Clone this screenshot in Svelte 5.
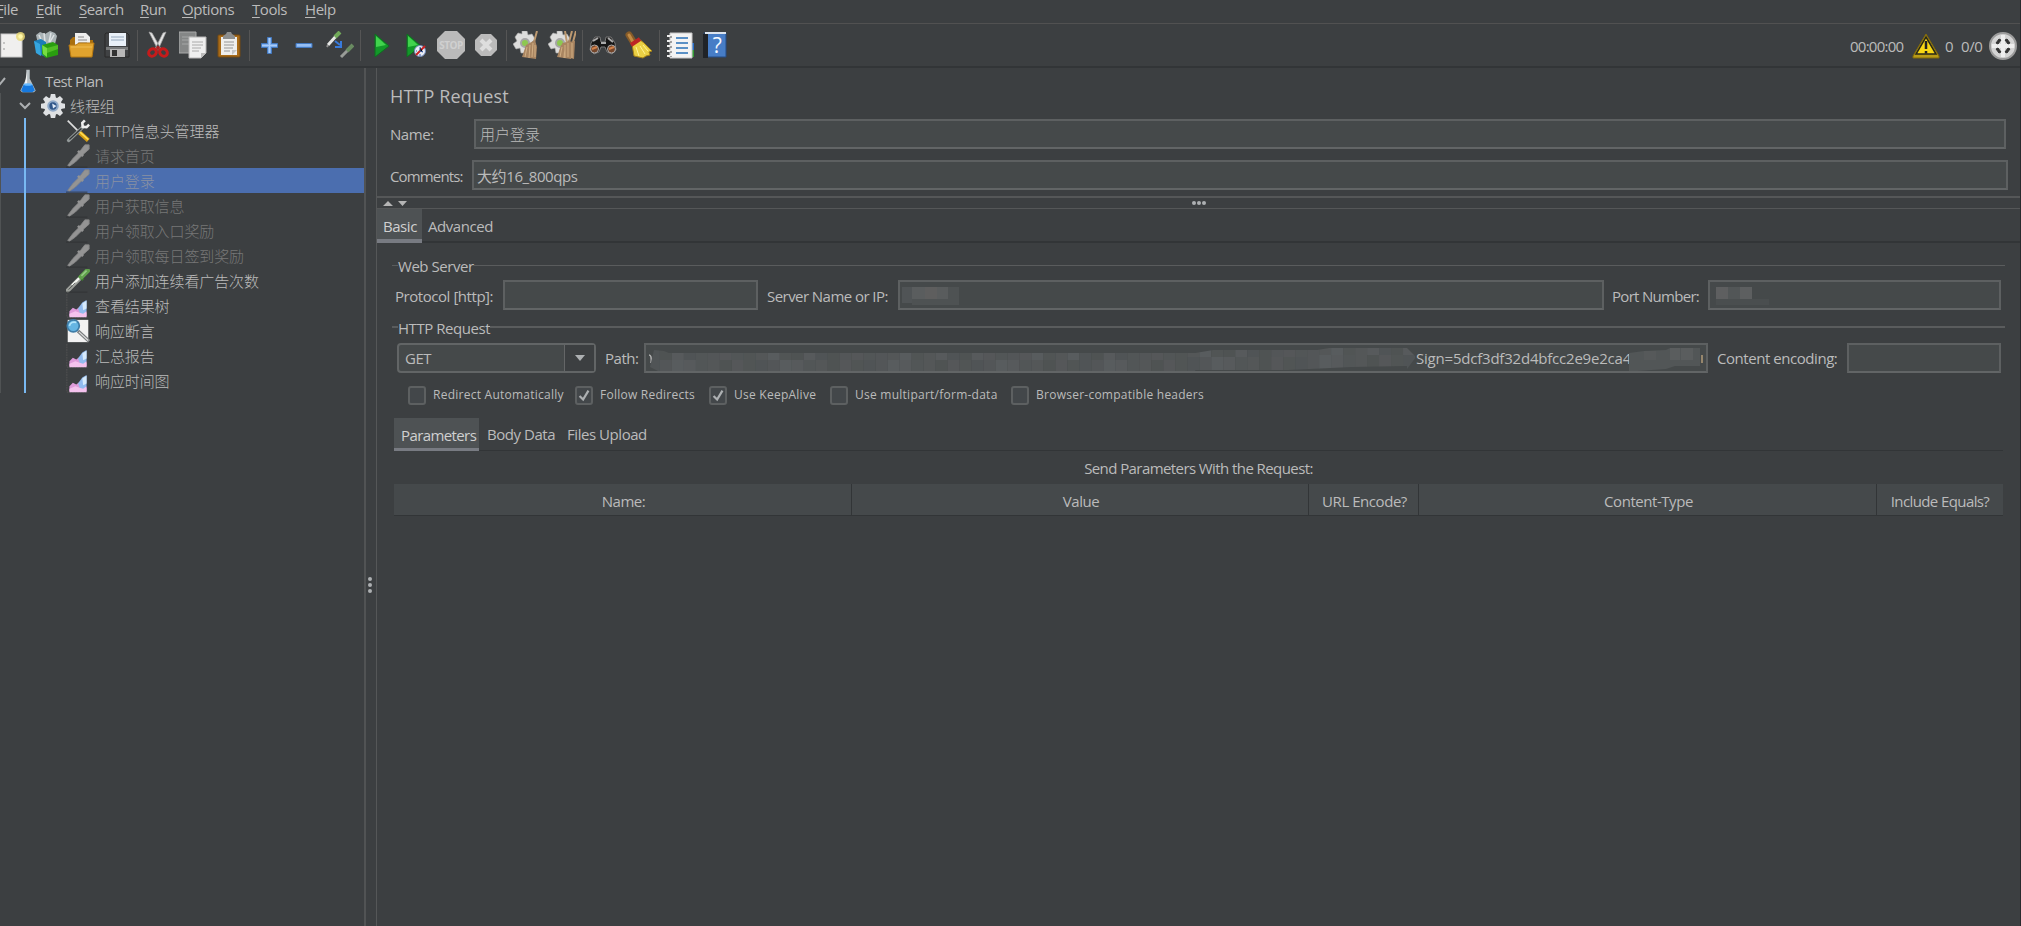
<script>
    let selected = "用户登录"

    const menus = [
        { title: "File", width: 37 },
        { title: "Edit", width: 43 },
        { title: "Search", width: 61 },
        { title: "Run", width: 42 },
        { title: "Options", width: 70 },
        { title: "Tools", width: 53 },
        { title: "Help", width: 50 }
    ]

    const tools = [
        ["new", "templates", "open", "save"],
        ["cut", "copy", "paste"],
        ["plus", "minus", "toggle"],
        ["run", "runNow", "stop", "shutdown"],
        ["clear", "clearAll"],
        ["search", "broom"],
        ["functions", "help"]
    ]

    const nodes = [
        { title: "HTTP信息头管理器", icon: "tools" },
        { title: "请求首页", icon: "dropperOff", disabled: true },
        { title: "用户登录", icon: "dropperOff", disabled: true },
        { title: "用户获取信息", icon: "dropperOff", disabled: true },
        { title: "用户领取入口奖励", icon: "dropperOff", disabled: true },
        { title: "用户领取每日签到奖励", icon: "dropperOff", disabled: true },
        { title: "用户添加连续看广告次数", icon: "dropper" },
        { title: "查看结果树", icon: "graph" },
        { title: "响应断言", icon: "assertion" },
        { title: "汇总报告", icon: "graph" },
        { title: "响应时间图", icon: "graph" }
    ]

    let options = [
        { title: "Redirect Automatically", checked: false, width: 167 },
        { title: "Follow Redirects", checked: true, width: 134 },
        { title: "Use KeepAlive", checked: true, width: 121 },
        { title: "Use multipart/form-data", checked: false, width: 181 },
        { title: "Browser-compatible headers", checked: false, width: 220 }
    ]

    const columns = ["Name:", "Value", "URL Encode?", "Content-Type", "Include Equals?"]

    // masked part of the path, in 12px cells
    const shades = ["#505456", "#545758", "#525657", "#575a5c", "#515555", "#555759", "#4f5353", "#585c5e", "#535658"]
    const cells = Array.from({ length: 64 }, (_, i) => ({
        x: i * 12,
        y: i < 45 ? 8 : i < 55 ? 5 : 3,
        top: shades[(i * 5 + (i % 4)) % 9],
        bottom: shades[(i * 7 + (i % 3)) % 9]
    }))
</script>

{#snippet icon(name)}
    <svg class="icon" viewBox="0 0 28 28">
        {#if name == "new"}
            <rect x="3" y="3" width="21" height="23" fill="#f0efee" stroke="#c9c9c9" />
            <path d="M5 12h2M5 18h2" stroke="#999" />
            <circle cx="22.500" cy="5.500" r="4.500" fill="#ead978" opacity=".85" />
            <circle cx="22.500" cy="5.500" r="2.200" fill="#fff9a8" />
        {:else if name == "templates"}
            <path d="M3 4l4-3 5 2 5-3 5 2 2 3-2 8H5z" fill="#aab3b6" />
            <path d="M6 4l3 7M11 2l1 9M18 2l-2 9M21 4l-4 7" stroke="#dde2e4" stroke-width="1.500" />
            <path d="M1 10l7-2 5 3v15l-8-3z" fill="#1c7db8" />
            <path d="M1 10l6 3 1 12-5-3z" fill="#35a5df" />
            <path d="M9 14l11-3 5 3v10l-12 3-4-4z" fill="#299d10" />
            <path d="M9 14l5 3v9l-4-3z" fill="#76dd43" />
            <path d="M14 17l11-3v4l-11 4z" fill="#50bd25" />
        {:else if name == "open"}
            <path d="M2 9l3-3h7l2 3h11v15H2z" fill="#a96f0e" />
            <path d="M7 2h11l4 4v13H7z" fill="#eeeeed" />
            <path d="M10 6h6M10 9h9M10 12h9" stroke="#888" />
            <path d="M1 14h7l3-2h15l-2 14H3z" fill="#e0a32e" stroke="#b57812" />
            <path d="M3 16h21" stroke="#f0bd52" />
        {:else if name == "save"}
            <path d="M3 2h21l2 2v22H2V3z" fill="#404244" stroke="#292929" />
            <path d="M6 2h17v13H6z" fill="#e9f0f8" />
            <path d="M8 6h13M8 9h13" stroke="#94a7bc" />
            <path d="M3 16h22v3H3z" fill="#77797a" />
            <path d="M7 18h15v8H7z" fill="#b8b8b8" />
            <path d="M9 19h5v6H9z" fill="#333" />
        {:else if name == "cut"}
            <path d="M5 1l3 1 9 16-3 1zM22 1l-3 1-8 16 3 1z" fill="#e4e4e4" stroke="#a5a5a5" stroke-width=".7" />
            <ellipse cx="8.500" cy="21.500" rx="4" ry="3.500" transform="rotate(-35 8.500 21.500)" fill="none" stroke="#c51b1b" stroke-width="3" />
            <ellipse cx="19.500" cy="21.500" rx="4" ry="3.500" transform="rotate(35 19.500 21.500)" fill="none" stroke="#c51b1b" stroke-width="3" />
            <circle cx="14" cy="17" r="2" fill="#a22" />
        {:else if name == "copy"}
            <path d="M0 1h17v21H0z" fill="#858787" stroke="#a8a9a9" />
            <path d="M3 6h11M3 9h11M3 13h9" stroke="#a5a7a7" />
            <path d="M10 6h17v16l-5 5H10z" fill="#efefef" stroke="#b6b6b6" />
            <path d="M13 11h11M13 14h11M13 17h9M13 20h7" stroke="#aaa" />
            <path d="M22 27v-5h5" fill="#bbb" />
        {:else if name == "paste"}
            <rect x="3" y="4" width="22" height="22" rx="1" fill="#a86b18" stroke="#754a12" />
            <path d="M6 6h16v18H6z" fill="#eeeeed" />
            <path d="M8 5l3-2 1-2h4l1 2 3 2v3H8z" fill="#8d8f8f" />
            <path d="M9 11h10M9 14h10M9 17h9M9 20h6" stroke="#969696" />
            <path d="M17 24v-5h5" fill="#c5c5c5" />
        {:else if name == "plus"}
            <path d="M11.500 6.500h4v6h6v4h-6v6h-4v-6h-6v-4h6z" fill="#82b1ee" stroke="#4379bf" />
            <path d="M13.500 7v15M6 14.500h15" stroke="#a9ccf8" />
        {:else if name == "minus"}
            <path d="M5 12.500h16v4H5z" fill="#82b1ee" stroke="#4379bf" />
            <path d="M6 14h14" stroke="#a9ccf8" />
        {:else if name == "toggle"}
            <path d="M2 14L11 4" stroke="#e7e8e6" stroke-width="3" />
            <path d="M9 6l5-5" stroke="#72aa5a" stroke-width="4" />
            <path d="M2 14l-1 2" stroke="#8e8e8e" stroke-width="2" />
            <path d="M9 10l5 4m1-4v6H9" fill="none" stroke="#387bdc" stroke-width="2" />
            <path d="M15 26l7-7" stroke="#999c98" stroke-width="3" />
            <path d="M21 20l6-6" stroke="#698b61" stroke-width="4" />
        {:else if name == "run" || name == "runNow"}
            <path d={name == "run" ? "M8 3l14 12L8 26z" : "M5 3l14 12L5 26z"} fill="#139829" stroke="#0f6d20" />
            <path d={name == "run" ? "M9 5l10 9-10 2z" : "M6 5l10 9-10 2z"} fill="#41d34d" />
            {#if name == "runNow"}
                <circle cx="18" cy="20" r="5.500" fill="#e9edf5" stroke="#6f87b7" />
                <path d="M14 24l9-9" stroke="#c92022" stroke-width="2" />
                <path d="M18 16v4l3 1M14 20h1M18 25v-2" stroke="#345ca5" />
            {/if}
        {:else if name == "stop"}
            <path d="M8 0h12l8 8v12l-8 8H8l-8-8V8z" fill="#bababa" />
            <text x="14" y="18" text-anchor="middle" font-size="10" font-weight="bold" fill="#d0d0d0">STOP</text>
        {:else if name == "shutdown"}
            <path d="M9 3h10l6 6v10l-6 6H9l-6-6V9z" fill="#bbb" />
            <path d="M9 9l10 10M19 9L9 19" stroke="#dedede" stroke-width="4" />
        {:else if name == "clear" || name == "clearAll"}
            <path d="M9 0h5l1 4 4-1 3 5-3 3 4 3-2 5-5-1-2 4H8l-1-5-4 1-3-5 4-3-2-4 3-4 4 1z" fill="#dddddc" stroke="#adadac" stroke-width=".6" />
            <circle cx="12" cy="12" r="4" fill="#8dc850" stroke="#a5a5a5" stroke-width="2" />
            <path d="M24 0l-3 11" stroke="#bc9970" stroke-width="2" />
            <path d="M13 14l9-5 2 7-1 12-14-2z" fill="#a98561" />
            <path d="M14 16l-2 10M17 14l-1 13M20 12l-1 14M22 14v12" stroke="#d0ae84" />
            {#if name == "clearAll"}
                <path d="M17 0l2 12M28 0l-3 11" stroke="#bc9970" stroke-width="2" />
                <path d="M14 12l13-2-1 18-8-2z" fill="#a98561" />
                <path d="M17 14v13M20 12v14M24 12v15" stroke="#d0ae84" />
            {/if}
        {:else if name == "search"}
            <path d="M2 12l4-6h5l1 5h4l1-5h5l4 6 1 7-4 4-5-2-2-5h-4l-2 5-5 2-4-4z" fill="#161616" stroke="#777" />
            <path d="M4 10l5-3M19 7l5 4M12 12h5" stroke="#aaa" stroke-width="2" />
            <circle cx="5.500" cy="18" r="4" fill="#74462b" stroke="#aaa" />
            <circle cx="22.500" cy="18" r="4" fill="#74462b" stroke="#aaa" />
            <path d="M3 18l5-2M20 18l5-2" stroke="#d28149" stroke-width="2" />
        {:else if name == "broom"}
            <path d="M4 4l5 8" stroke="#865b28" stroke-width="7" stroke-linecap="round" />
            <path d="M4 4l4 7" stroke="#c28b44" stroke-width="3" stroke-linecap="round" />
            <path d="M7 13l7-5 5 4 8 8-3 1 1 3-4 1-3 2-9-2z" fill="#ead044" stroke="#a58117" />
            <path d="M6 14l9-6" stroke="#bd2525" stroke-width="4" />
            <path d="M11 16l3 9M15 15l5 8M18 14l5 6" stroke="#fff292" />
        {:else if name == "functions"}
            <path d="M26 12h2v7h-2z" fill="#276dc9" /><path d="M26 19h2v7h-2z" fill="#329c35" />
            <path d="M4 2h22v25H4z" fill="#f3f3f3" stroke="#c7c7c7" />
            <path d="M1 5h5M1 10h5M1 15h5M1 20h5M1 25h5" stroke="#ededed" stroke-width="2" />
            <path d="M5 5v21" stroke="#535353" stroke-dasharray="2 3" />
            <path d="M10 7h12M10 12h12M10 17h12M10 22h12" stroke="#2870b7" stroke-width="1.500" />
        {:else if name == "help"}
            <path d="M3 2h22v24H3z" fill="#477dc6" stroke="#244c85" />
            <path d="M2 3l5-2v26H2z" fill="#202327" />
            <path d="M4 2h21" stroke="#dce4ee" stroke-width="2" />
            <text x="16" y="22" text-anchor="middle" font-size="21" fill="#f6f9ff">?</text>
        {:else if name == "flask"}
            <path d="M12 1h4v10l7 14-2 2H7l-2-2 7-14z" fill="#b8c0c4" />
            <path d="M13 2l-3 16h3z" fill="#f2f2f2" />
            <path d="M9 18h10l3 7-3 2H8l-2-2z" fill="#1679df" />
            <ellipse cx="14" cy="18" rx="5" ry="1.500" fill="#67baff" />
        {:else if name == "gear"}
            <g fill="#dfe1e3">
                <circle cx="14" cy="14" r="10.500" />
                {#each [0, 45, 90, 135] as angle}
                    <path d="M11.500 0h5l1 5h-7zM11.500 28h5l1-5h-7z" transform="rotate({angle} 14 14)" />
                {/each}
            </g>
            <circle cx="14" cy="14" r="5.500" fill="#2f5689" stroke="#8fa9c8" stroke-width="2.500" />
            <path d="M13 11l5 3-4 3z" fill="#e0ebf8" />
        {:else if name == "tools"}
            <path d="M2 2l14 14" stroke="#ddd" stroke-width="2" />
            <path d="M16 16l10 9" stroke="#d39b12" stroke-width="5" />
            <path d="M16 15l10 9" stroke="#ffdc50" stroke-width="2" />
            <path d="M3 25L20 9" stroke="#929898" stroke-width="4" stroke-linecap="round" />
            <path d="M4 24L18 11" stroke="#343738" stroke-width="1.500" />
            <path d="M22 1.500l-3 3 .5 4.500 4.500.5 3-3" fill="none" stroke="#eee" stroke-width="3" />
        {:else if name == "dropper"}
            <path d="M2 25L18 9" stroke="#9da09b" stroke-width="5" stroke-linecap="round" />
            <path d="M7 19L17 9" stroke="#f5f7f2" stroke-width="2.500" />
            <path d="M3 24L11 16" stroke="#444746" stroke-width="1" />
            <path d="M15 8l5 5" stroke="#397a29" stroke-width="3" />
            <path d="M18 9l7-7" stroke="#5f9f4b" stroke-width="6" stroke-linecap="round" />
            <path d="M18 8l6-6" stroke="#93c982" stroke-width="2" />
            <path d="M0 27h25" stroke="#303234" />
        {:else if name == "dropperOff"}
            <path d="M2 25L8 17L15 10L22 1L27 1L27 6L19 13L11 21L4 26z" fill="#949494" stroke="#858585" />
            <path d="M14 8l6 6" stroke="#949494" stroke-width="3" />
            <path d="M0 27h25" stroke="#303234" />
        {:else if name == "graph"}
            <path d="M1 0v27h25" fill="none" stroke="#555" stroke-dasharray="2 1" />
            <path d="M4 20l4-4 4 2 4-3 8 5v6H4z" fill="#df9bda" />
            <path d="M4 23l7-3 5 2 6-3 2 3v5H4z" fill="#f4c2ed" />
            <path d="M14 17l5-7 5-3v13l-4 3-4-1z" fill="#91bbef" />
            <path d="M19 11l5-3v9l-4 2z" fill="#d6eafb" />
        {:else if name == "assertion"}
            <path d="M2 1h24v26H2z" fill="#f2f2f2" />
            <path d="M14 14l13 12" stroke="#777b7d" stroke-width="4" />
            <path d="M15 15l11 10" stroke="#ddd" stroke-width="1.500" />
            <circle cx="8.500" cy="8" r="7" fill="#65b5e3" stroke="#3f7da7" stroke-width="2" />
            <path d="M4 8c1-4 4-5 8-4" fill="none" stroke="#b2e5fb" stroke-width="2" />
        {/if}
    </svg>
{/snippet}

<div class="window">
    <nav class="menubar">
        {#each menus as menu}
            <span class="menu" style:width="{menu.width}px"><u>{menu.title[0]}</u>{menu.title.slice(1)}</span>
        {/each}
    </nav>

    <header class="toolbar">
        <div class="tool-buttons">
            {#each tools as group, index}
                {#if index > 0}<span class="separator"></span>{/if}
                {#each group as tool}
                    <button class="tool" aria-label={tool}>{@render icon(tool)}</button>
                {/each}
            {/each}
        </div>
        <div class="status">
            <span class="timer">00:00:00</span>
            <svg class="warning" viewBox="0 0 28 26">
                <path d="M14 1l13 22v2H1v-2z" fill="#b99b16" stroke="#80680b" />
                <path d="M14 4l10 17H4z" fill="#f8d714" stroke="#292817" stroke-width="1.500" />
                <path d="M14 8v8M14 18v2.500" stroke="#222" stroke-width="2.500" />
            </svg>
            <span class="errors">0</span>
            <span class="threads">0/0</span>
            <svg class="remote" viewBox="0 0 28 28">
                <circle cx="14" cy="14" r="13" fill="#d4d4d4" stroke="#9c9c9c" stroke-width="2" />
                <path d="M14 3v22M3 14h22" stroke="#eee" stroke-width="4" />
                <path d="M7 11l3-4 2 1-3 4zM18 7l3 4-2 1-3-4zM7 17l2-1 3 4-2 1zM18 21l3-4-2-1-3 4z" fill="#333" stroke="#333" />
            </svg>
        </div>
    </header>

    <main class="workspace">
        <aside class="tree">
            <div class="row root">
                <svg class="chevron" viewBox="0 0 12 12"><path d="M1 4l5 5 5-6" /></svg>
                {@render icon("flask")}<span>Test Plan</span>
            </div>
            <div class="branch">
                <div class="row group">
                    <svg class="chevron" viewBox="0 0 12 12"><path d="M1 3l5 5 5-5" /></svg>
                    {@render icon("gear")}<span>线程组</span>
                </div>
                <div class="children">
                    {#each nodes as node}
                        <!-- svelte-ignore a11y_click_events_have_key_events, a11y_no_static_element_interactions -->
                        <div class="row leaf" class:disabled={node.disabled} class:selected={node.title == selected} on:click={() => selected = node.title}>
                            <i class="guide"></i>{@render icon(node.icon)}<span>{node.title}</span>
                        </div>
                    {/each}
                </div>
            </div>
        </aside>
        <div class="splitter"><i></i><i></i><i></i></div>

        <section class="editor">
            <div class="heading">
                <h1>HTTP Request</h1>
                <div class="name-row"><span>Name:</span><div class="field">用户登录</div></div>
                <div class="comment-row"><span>Comments:</span><div class="field">大约16_800qps</div></div>
            </div>
            <div class="hsplit">
                <svg class="arrows" viewBox="0 0 30 10"><path d="M6 8l5-5 5 5zM21 3h9l-4.500 5z" fill="#b5b5b5" /></svg>
                <div class="dots"><i></i><i></i><i></i></div>
            </div>
            <div class="tabs main-tabs">
                <span class="tab active">Basic</span>
                <span class="tab">Advanced</span>
            </div>

            <div class="basic">
                <div class="legend server-legend"><span>Web Server</span></div>
                <div class="server">
                    <span>Protocol [http]:</span><div class="field"></div>
                    <span class="server-name">Server Name or IP:</span>
                    <div class="field masked">
                        <svg class="mask" viewBox="0 0 57 18">
                            <path d="M0 0h10v16H0z" fill="#505456" /><path d="M10 0h13v12H10z" fill="#5a5d5e" />
                            <path d="M23 0h12v12H23z" fill="#5e5e5e" /><path d="M35 0h11v12H35z" fill="#595c5d" />
                            <path d="M46 0h11v18H46zM10 12h36v6H10z" fill="#4e5253" />
                        </svg>
                    </div>
                    <span class="port">Port Number:</span>
                    <div class="field masked">
                        <svg class="mask" viewBox="0 0 57 18">
                            <path d="M4 0h12v12H4z" fill="#5e5f60" /><path d="M16 0h12v12H16z" fill="#525657" />
                            <path d="M28 0h12v12H28z" fill="#5d5f60" /><path d="M4 12h56v6H4z" fill="#4a4e4f" />
                        </svg>
                    </div>
                </div>
                <div class="legend request-legend"><span>HTTP Request</span></div>
                <div class="request">
                    <div class="combo">
                        <span>GET</span>
                        <i><svg viewBox="0 0 12 8"><path d="M1 1h10L6 7z" fill="#adb0b2" /></svg></i>
                    </div>
                    <span class="path-label">Path:</span>
                    <div class="field path">
                        <svg class="long-mask" viewBox="0 0 771 28">
                            <path d="M3 10q3 0 2 8" fill="none" stroke="#b0b0b0" stroke-width="1.500" />
                            <clipPath id="stroke"><path d="M8 5l10 1 5 2h527l18-3h104l12-2h78l9 9-9 12v-3l-55 1-64 3h-93v5H20L4 22z" /></clipPath>
                            <g clip-path="url(#stroke)">
                                {#each cells as cell}
                                    <rect x={cell.x + 2} y={cell.y - 4} width="12" height="11" fill={cell.top} />
                                    <rect x={cell.x + 2} y={cell.y + 7} width="12" height="15" fill={cell.bottom} />
                                {/each}
                            </g>
                        </svg>
                        <span class="sign">Sign=5dcf3df32d4bfcc2e9e2ca4</span>
                        <svg class="short-mask" viewBox="0 0 74 28">
                            <path d="M0 9l15-2 22-1 4-2h30v18H46l-9 3-28 2H0z" fill="#525657" />
                            <path d="M41 4h10v12H41zM52 4h12v12H52z" fill="#5a5d5e" />
                            <path d="M15 7h12v9H15z" fill="#56595a" />
                            <path d="M73 11v8" stroke="#b29b78" stroke-width="1.500" />
                        </svg>
                    </div>
                    <span class="encoding">Content encoding:</span><div class="field"></div>
                </div>
                <div class="options">
                    {#each options as option}
                        <button class="option" style:width="{option.width}px" on:click={() => option.checked = !option.checked}>
                            <i class="box">
                                {#if option.checked}
                                    <svg viewBox="0 0 18 18"><path d="M4 9l4 4 6-10" /></svg>
                                {/if}
                            </i>
                            <span>{option.title}</span>
                        </button>
                    {/each}
                </div>

                <div class="tabs parameter-tabs">
                    <span class="tab active">Parameters</span>
                    <span class="tab body-tab">Body Data</span>
                    <span class="tab">Files Upload</span>
                </div>
                <div class="caption">Send Parameters With the Request:</div>
                <div class="table-head">
                    {#each columns as column}
                        <span>{column}</span>
                    {/each}
                </div>
            </div>
        </section>
    </main>
</div>

<style>
    :global(body) {
        background: #3c3f41;
        overflow: hidden;
    }

    .window {
        display: flex;
        flex-direction: column;
        box-sizing: border-box;
        width: 2021px;
        height: 926px;
        overflow: hidden;
        border-right: 1px solid #292b2d;
        background: #3c3f41;
        color: #bbb;
        font: 15px/20px "Open Sans", "Noto Sans CJK SC", sans-serif;
        letter-spacing: -0.45px;
        white-space: nowrap;
    }

    .window * {
        box-sizing: border-box;
    }

    svg {
        display: block;
        flex: none;
    }

    button {
        padding: 0;
        border: none;
        background: none;
        color: inherit;
        font: inherit;
        letter-spacing: inherit;
    }

    .menubar {
        display: flex;
        height: 24px;
        margin-left: -1px;
        border-bottom: 1px solid #515151;
        line-height: 18px;
    }

    .menu {
        flex: none;
    }

    .menu:first-child {
        text-indent: -3px;
    }

    u {
        text-underline-offset: 2px;
    }

    .toolbar {
        display: flex;
        justify-content: space-between;
        height: 44px;
        border-bottom: 2px solid #323537;
    }

    .tool-buttons {
        display: flex;
        align-items: center;
        height: 42px;
        margin-left: -5.6px;
    }

    .tool {
        display: flex;
        justify-content: center;
        width: 35.1px;
    }

    .tool .icon {
        width: 28px;
        height: 28px;
    }

    .separator {
        width: 6px;
        height: 31px;
        background: linear-gradient(#555, #555) center / 1px 100% no-repeat;
    }

    .status {
        display: flex;
        align-items: center;
        height: 43px;
        padding-right: 3px;
    }

    .timer {
        width: 62px;
        letter-spacing: -0.75px;
    }

    .warning {
        width: 28px;
        height: 26px;
        margin-right: 5px;
    }

    .errors {
        width: 16px;
    }

    .threads {
        width: 28px;
    }

    .remote {
        width: 28px;
        height: 28px;
    }

    .workspace {
        display: flex;
        flex: 1;
    }

    .tree {
        width: 366px;
        border-right: 2px solid #515354;
    }

    .branch {
        border-left: 1px solid #505354;
    }

    .row {
        display: flex;
        align-items: center;
        height: 25px;
    }

    .row span {
        padding-bottom: 1px;
        margin-top: 1px;
    }

    .row .icon {
        width: 24px;
        height: 24px;
    }

    .root {
        margin-left: -6px;
        letter-spacing: -0.6px;
    }

    .root .icon {
        margin: 0 5px 0 10px;
    }

    .chevron {
        width: 12px;
        height: 12px;
        fill: none;
        stroke: #adb0b2;
        stroke-width: 2;
    }

    .group {
        padding-left: 18px;
    }

    .group .icon {
        margin: 0 5px 0 10px;
    }

    .leaf,
    .group {
        font-family: "Noto Sans CJK SC", sans-serif;
        font-weight: 300;
        letter-spacing: -0.1px;
    }

    .leaf {
        font-family: "Open Sans", "Noto Sans CJK SC", sans-serif;
    }

    .leaf .icon {
        margin: 0 5px 0 40px;
    }

    .guide {
        align-self: stretch;
        width: 2px;
        margin-left: 23px;
        background: #79b9f2;
    }

    .disabled {
        color: #777;
    }

    .selected {
        background: #4b6eaf;
        color: #8991a3;
    }

    .splitter {
        display: flex;
        flex-direction: column;
        align-items: center;
        gap: 2px;
        width: 11px;
        padding-top: 509px;
        padding-right: 2px;
        border-right: 1px solid #555758;
    }

    .splitter i,
    .dots i {
        width: 4px;
        height: 4px;
        border-radius: 50%;
        background: #adb0b2;
    }

    .editor {
        flex: 1;
        min-width: 0;
    }

    .heading {
        height: 128px;
        padding: 16px 12px 0 13px;
    }

    h1 {
        height: 24px;
        margin: 0 0 11px;
        font-size: 18px;
        font-weight: normal;
        line-height: 24px;
        letter-spacing: 0.15px;
    }

    .name-row,
    .comment-row {
        display: grid;
        grid-template-columns: 84px 1532px;
        align-items: center;
        height: 30px;
    }

    .comment-row {
        grid-template-columns: 82px 1536px;
        margin-top: 11px;
        line-height: 22px;
    }

    .comment-row > span {
        padding-top: 1px;
        letter-spacing: -0.85px;
    }

    .field {
        display: flex;
        align-items: center;
        height: 30px;
        padding-left: 4px;
        border: 2px solid #5d6061;
        border-bottom-color: #626566;
        background: #45494a;
        font-weight: 300;
        letter-spacing: 0;
    }

    .comment-row .field {
        padding: 2px 0 0 3px;
        font-weight: 400;
        letter-spacing: -0.4px;
    }

    .hsplit {
        display: flex;
        height: 13px;
        border-top: 2px solid #555758;
        border-bottom: 1px solid #555758;
    }

    .arrows {
        width: 30px;
        height: 10px;
    }

    .dots {
        display: flex;
        gap: 1px;
        margin: 3px 0 0 785px;
    }

    .tabs {
        display: flex;
        border-bottom: 2px solid #323537;
    }

    .tab {
        display: flex;
        align-items: center;
        padding-bottom: 1px;
    }

    .active {
        padding-top: 4px;
        border-bottom: 4px solid #787b82;
        background: #4e5254;
        color: #d0d0d0;
    }

    .main-tabs {
        height: 34px;
    }

    .main-tabs .tab {
        height: 34px;
        padding-left: 6px;
    }

    .main-tabs .active {
        width: 45px;
    }

    .basic {
        padding: 13px 15px 0;
    }

    .legend {
        display: grid;
        grid-template-columns: 6px auto 1fr;
        align-items: center;
        height: 20px;
    }

    .legend::before,
    .legend::after {
        content: "";
        height: 1px;
        margin-top: -2px;
        background: #5a5c5d;
    }

    .server {
        display: grid;
        grid-template-columns: 108px 255px 140px 706px 104px 293px;
        align-items: center;
        height: 30px;
        margin: 4px 0 0 3px;
    }

    .server > span {
        padding-top: 1px;
    }

    .server .server-name {
        padding-left: 9px;
        letter-spacing: -0.55px;
    }

    .server .port {
        padding-left: 8px;
        letter-spacing: -0.7px;
    }

    .mask {
        width: 57px;
        height: 18px;
        margin: 2px 0 0 -2px;
    }

    .request-legend {
        margin-top: 8px;
    }

    .request-legend::before,
    .request-legend::after {
        height: 2px;
    }

    .request {
        display: grid;
        grid-template-columns: 199px 48px 1064px 139px 154px;
        align-items: center;
        height: 30px;
        margin: 5px 0 0 5px;
    }

    .request > span {
        padding: 0 0 1px 9px;
    }

    .combo {
        display: flex;
        align-items: center;
        height: 30px;
        border: 2px solid #626566;
        border-radius: 4px;
        background: #45494a;
    }

    .combo span {
        flex: 1;
        padding: 0 0 1px 6px;
    }

    .combo i {
        display: flex;
        align-items: center;
        justify-content: center;
        width: 30px;
        height: 26px;
        border-left: 1px solid #646667;
        background: #3c3f41;
    }

    .combo svg {
        width: 12px;
        height: 8px;
    }

    .path {
        padding: 0;
        overflow: hidden;
        font-weight: 400;
    }

    .long-mask {
        width: 770px;
        height: 28px;
        margin-top: 2px;
    }

    .sign {
        width: 213px;
        padding-bottom: 1px;
        letter-spacing: -0.21px;
    }

    .short-mask {
        width: 74px;
        height: 28px;
    }

    .options {
        display: flex;
        align-items: center;
        height: 20px;
        margin: 12px 0 0 16px;
        font-size: 12px;
        letter-spacing: 0.25px;
    }

    .option {
        display: flex;
        align-items: center;
        flex: none;
        gap: 7px;
    }

    .box {
        width: 18px;
        height: 19px;
        border: 2px solid #5d6061;
        border-radius: 3px;
        background: #43474a;
    }

    .box svg {
        width: 16px;
        height: 16px;
        margin-left: -1px;
        fill: none;
        stroke: #adb0b2;
        stroke-width: 2.5;
    }

    .parameter-tabs {
        width: 1609px;
        height: 33px;
        margin: 13px 0 0 2px;
        border-bottom-width: 1px;
    }

    .parameter-tabs .tab {
        height: 33px;
        padding-left: 8px;
    }

    .parameter-tabs .active {
        width: 85px;
        padding-left: 7px;
        border-bottom-width: 3px;
        letter-spacing: -0.6px;
    }

    .parameter-tabs .body-tab {
        width: 80px;
    }

    .caption {
        width: 1609px;
        height: 33px;
        margin-left: 2px;
        padding-top: 7px;
        text-align: center;
        letter-spacing: -0.58px;
    }

    .table-head {
        display: grid;
        grid-template-columns: 458px 457px 110px 458px 126px;
        width: 1609px;
        height: 32px;
        margin-left: 2px;
        border-bottom: 1px solid #323537;
        background: #45494b;
    }

    .table-head span {
        padding: 7px 0 0 2px;
        text-align: center;
    }

    .table-head span:last-child {
        padding-left: 0;
        letter-spacing: -0.6px;
    }

    .table-head span:not(:last-child) {
        border-right: 1px solid #323537;
    }
</style>
